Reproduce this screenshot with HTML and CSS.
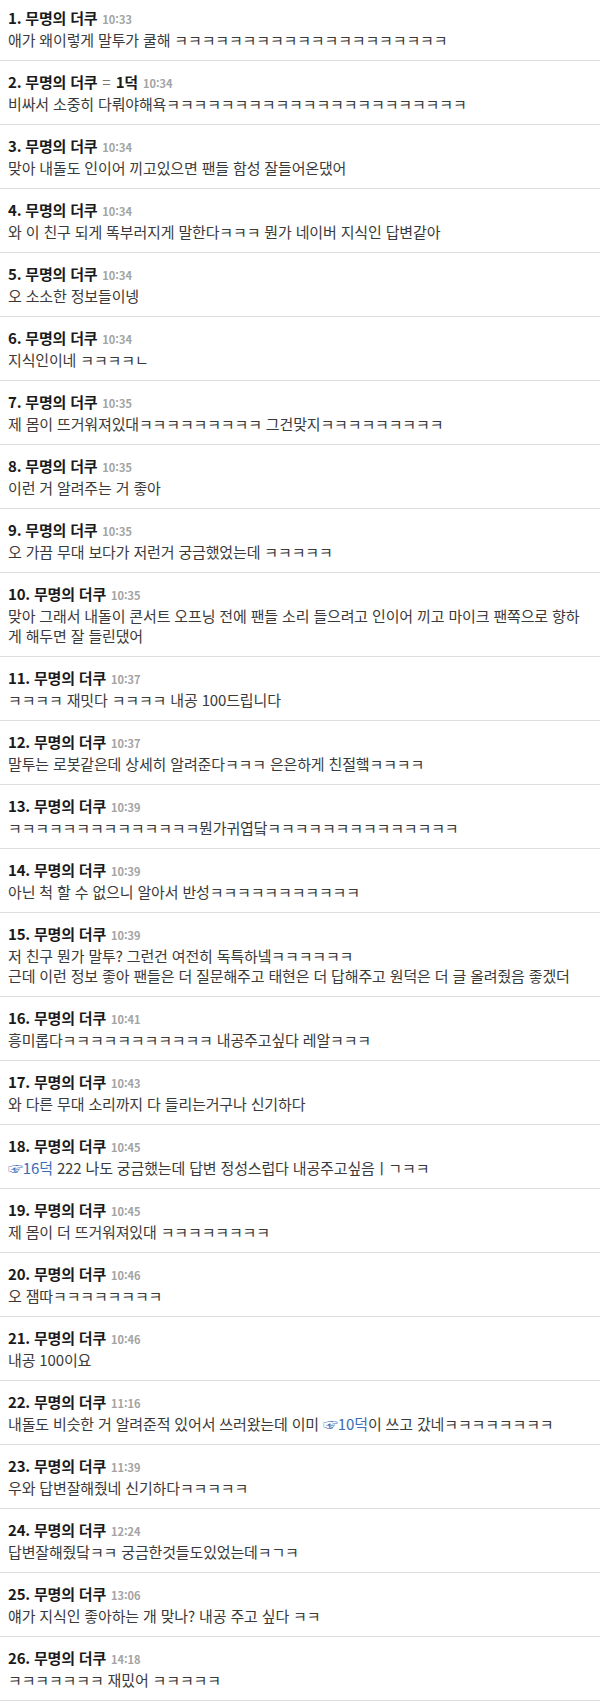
FILE: index.html
```html
<!DOCTYPE html>
<html lang="ko">
<head>
<meta charset="utf-8">
<title>댓글</title>
<link rel="stylesheet" href="styles.css">
</head>
<body>
<ul class="list">
  <li class="item"><div class="head"><span class="name">1. 무명의 더쿠</span><span class="time">10:33</span></div><div class="body">애가 왜이렇게 말투가 쿨해 ㅋㅋㅋㅋㅋㅋㅋㅋㅋㅋㅋㅋㅋㅋㅋㅋㅋㅋㅋㅋ</div></li>
  <li class="item"><div class="head"><span class="name">2. 무명의 더쿠</span><span class="eq">=</span><span class="name">1덕</span><span class="time">10:34</span></div><div class="body">비싸서 소중히 다뤄야해욕ㅋㅋㅋㅋㅋㅋㅋㅋㅋㅋㅋㅋㅋㅋㅋㅋㅋㅋㅋㅋㅋㅋ</div></li>
  <li class="item"><div class="head"><span class="name">3. 무명의 더쿠</span><span class="time">10:34</span></div><div class="body">맞아 내돌도 인이어 끼고있으면 팬들 함성 잘들어온댔어</div></li>
  <li class="item"><div class="head"><span class="name">4. 무명의 더쿠</span><span class="time">10:34</span></div><div class="body">와 이 친구 되게 똑부러지게 말한다ㅋㅋㅋ 뭔가 네이버 지식인 답변같아</div></li>
  <li class="item"><div class="head"><span class="name">5. 무명의 더쿠</span><span class="time">10:34</span></div><div class="body">오 소소한 정보들이넹</div></li>
  <li class="item"><div class="head"><span class="name">6. 무명의 더쿠</span><span class="time">10:34</span></div><div class="body">지식인이네 ㅋㅋㅋㅋㄴ</div></li>
  <li class="item"><div class="head"><span class="name">7. 무명의 더쿠</span><span class="time">10:35</span></div><div class="body">제 몸이 뜨거워져있대ㅋㅋㅋㅋㅋㅋㅋㅋㅋ 그건맞지ㅋㅋㅋㅋㅋㅋㅋㅋㅋ</div></li>
  <li class="item"><div class="head"><span class="name">8. 무명의 더쿠</span><span class="time">10:35</span></div><div class="body">이런 거 알려주는 거 좋아</div></li>
  <li class="item"><div class="head"><span class="name">9. 무명의 더쿠</span><span class="time">10:35</span></div><div class="body">오 가끔 무대 보다가 저런거 궁금했었는데 ㅋㅋㅋㅋㅋ</div></li>
  <li class="item"><div class="head"><span class="name">10. 무명의 더쿠</span><span class="time">10:35</span></div><div class="body">맞아 그래서 내돌이 콘서트 오프닝 전에 팬들 소리 들으려고 인이어 끼고 마이크 팬쪽으로 향하게 해두면 잘 들린댔어</div></li>
  <li class="item"><div class="head"><span class="name">11. 무명의 더쿠</span><span class="time">10:37</span></div><div class="body">ㅋㅋㅋㅋ 재밋다 ㅋㅋㅋㅋ 내공 100드립니다</div></li>
  <li class="item"><div class="head"><span class="name">12. 무명의 더쿠</span><span class="time">10:37</span></div><div class="body">말투는 로봇같은데 상세히 알려준다ㅋㅋㅋ 은은하게 친절햌ㅋㅋㅋㅋ</div></li>
  <li class="item"><div class="head"><span class="name">13. 무명의 더쿠</span><span class="time">10:39</span></div><div class="body">ㅋㅋㅋㅋㅋㅋㅋㅋㅋㅋㅋㅋㅋㅋ뭔가귀엽닼ㅋㅋㅋㅋㅋㅋㅋㅋㅋㅋㅋㅋㅋㅋ</div></li>
  <li class="item"><div class="head"><span class="name">14. 무명의 더쿠</span><span class="time">10:39</span></div><div class="body">아닌 척 할 수 없으니 알아서 반성ㅋㅋㅋㅋㅋㅋㅋㅋㅋㅋㅋ</div></li>
  <li class="item"><div class="head"><span class="name">15. 무명의 더쿠</span><span class="time">10:39</span></div><div class="body">저 친구 뭔가 말투? 그런건 여전히 독특하넼ㅋㅋㅋㅋㅋㅋ<br>근데 이런 정보 좋아 팬들은 더 질문해주고 태현은 더 답해주고 원덕은 더 글 올려줬음 좋겠더</div></li>
  <li class="item"><div class="head"><span class="name">16. 무명의 더쿠</span><span class="time">10:41</span></div><div class="body">흥미롭다ㅋㅋㅋㅋㅋㅋㅋㅋㅋㅋㅋ 내공주고싶다 레알ㅋㅋㅋ</div></li>
  <li class="item"><div class="head"><span class="name">17. 무명의 더쿠</span><span class="time">10:43</span></div><div class="body">와 다른 무대 소리까지 다 들리는거구나 신기하다</div></li>
  <li class="item"><div class="head"><span class="name">18. 무명의 더쿠</span><span class="time">10:45</span></div><div class="body"><a class="ref">☞16덕</a> 222 나도 궁금했는데 답변 정성스럽다 내공주고싶음ㅣㄱㅋㅋ</div></li>
  <li class="item"><div class="head"><span class="name">19. 무명의 더쿠</span><span class="time">10:45</span></div><div class="body">제 몸이 더 뜨거워져있대 ㅋㅋㅋㅋㅋㅋㅋㅋ</div></li>
  <li class="item"><div class="head"><span class="name">20. 무명의 더쿠</span><span class="time">10:46</span></div><div class="body">오 잼따ㅋㅋㅋㅋㅋㅋㅋㅋ</div></li>
  <li class="item"><div class="head"><span class="name">21. 무명의 더쿠</span><span class="time">10:46</span></div><div class="body">내공 100이요</div></li>
  <li class="item"><div class="head"><span class="name">22. 무명의 더쿠</span><span class="time">11:16</span></div><div class="body">내돌도 비슷한 거 알려준적 있어서 쓰러왔는데 이미 <a class="ref">☞10덕</a>이 쓰고 갔네ㅋㅋㅋㅋㅋㅋㅋㅋ</div></li>
  <li class="item"><div class="head"><span class="name">23. 무명의 더쿠</span><span class="time">11:39</span></div><div class="body">우와 답변잘해줬네 신기하다ㅋㅋㅋㅋㅋ</div></li>
  <li class="item"><div class="head"><span class="name">24. 무명의 더쿠</span><span class="time">12:24</span></div><div class="body">답변잘해줬닼ㅋㅋ 궁금한것들도있었는데ㅋㄱㅋ</div></li>
  <li class="item"><div class="head"><span class="name">25. 무명의 더쿠</span><span class="time">13:06</span></div><div class="body">얘가 지식인 좋아하는 개 맞나? 내공 주고 싶다 ㅋㅋ</div></li>
  <li class="item"><div class="head"><span class="name">26. 무명의 더쿠</span><span class="time">14:18</span></div><div class="body">ㅋㅋㅋㅋㅋㅋㅋ 재밌어 ㅋㅋㅋㅋㅋ</div></li>
</ul>
</body>
</html>
```

FILE: styles.css
```css
html, body {
  margin: 0;
  padding: 0;
  background: #ffffff;
}

body {
  font-family: "Noto Sans CJK KR", "Noto Sans", sans-serif;
  color: #333333;
}

.list {
  list-style: none;
  margin: 0;
  padding: 0;
}

.item {
  padding: 11px 10px 10px 8px;
  border-bottom: 1px solid #dddddd;
}

.item:first-child {
  padding-top: 8px;
}

.head {
  display: flex;
  align-items: baseline;
  gap: 5px;
  height: 20px;
  line-height: 20px;
  margin-bottom: 2px;
}

.name {
  font-size: 15px;
  font-weight: 700;
  color: #1a1a1a;
  letter-spacing: -0.2px;
}

.eq {
  font-size: 15px;
  color: #777777;
}

.time {
  font-size: 11px;
  font-weight: 700;
  color: #a3a3a3;
}

.body {
  font-size: 15px;
  line-height: 20px;
  letter-spacing: -0.15px;
  color: #3a3a3a;
}

.ref {
  color: #3a6db5;
  text-decoration: none;
}
```
